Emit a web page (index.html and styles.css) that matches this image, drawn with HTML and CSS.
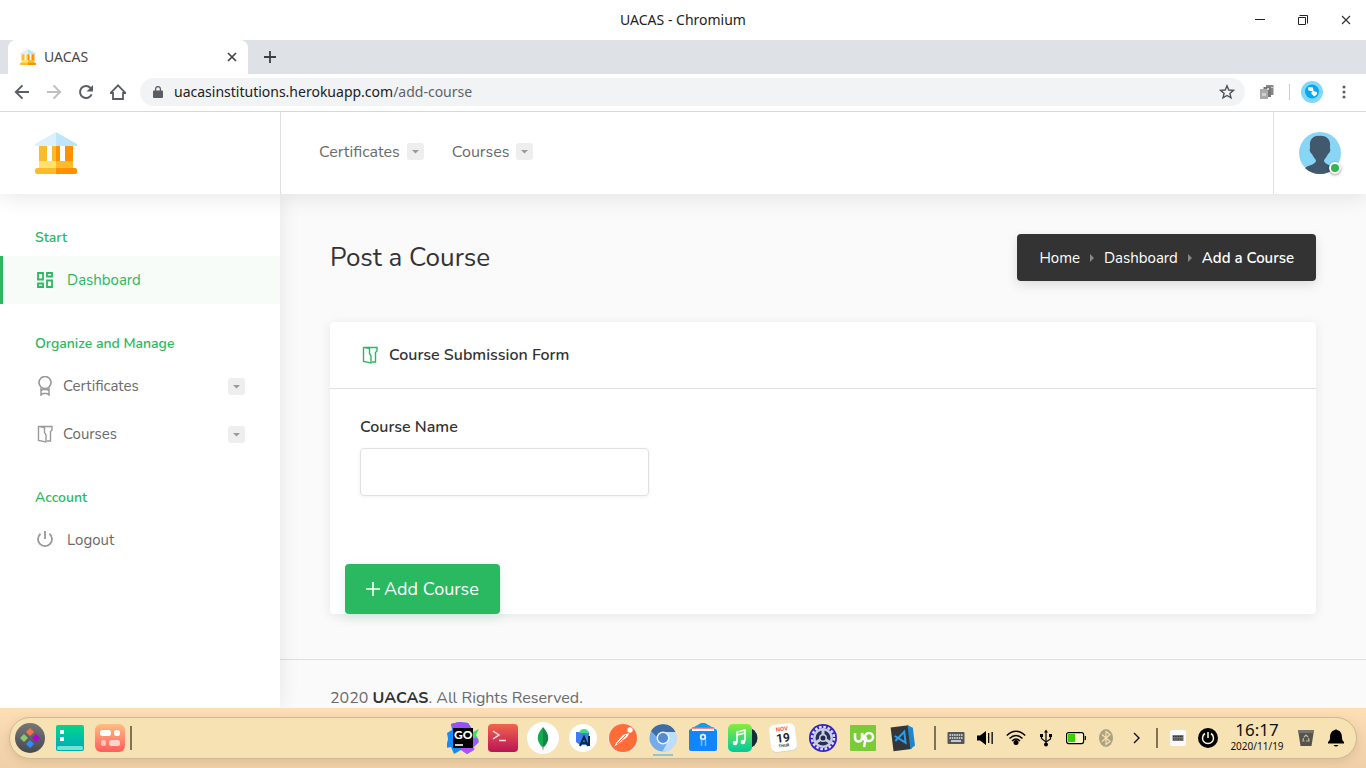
FILE: index.html
```html
<!DOCTYPE html>
<html lang="en">
<head>
<meta charset="utf-8">
<title>UACAS</title>
<meta name="viewport" content="width=device-width, initial-scale=1">
<link rel="stylesheet" href="styles.css">
</head>
<body>
<svg class="defs" aria-hidden="true">
  <defs>
    <symbol id="bank" viewBox="0 0 42 42">
      <path d="M21 0 0 12v2h21z" fill="#dcf0fd"/><path d="M21 0l21 12v2H21z" fill="#bde6fa"/>
      <path d="M4 14h8v16H4zM17 14h4v16h-4z" fill="#fbbc2c"/>
      <path d="M21 14h4v16h-4zM30 14h8v16h-8z" fill="#ff9100"/>
      <path d="M4 29h17v8H4z" fill="#ffe16b"/><path d="M21 29h17v8H21z" fill="#fbbc2c"/>
      <path d="M21 36H2a2 2 0 0 0-2 2v2a2 2 0 0 0 2 2h19z" fill="#fbbc2c"/>
      <path d="M21 36h19a2 2 0 0 1 2 2v2a2 2 0 0 1-2 2H21z" fill="#ff9100"/>
    </symbol>
    <symbol id="map" viewBox="0 0 16 18">
      <path d="M1.500 1.500h13.500v3.500l-1.500 1.500v9.500h-3.500M1.500 1v14.500l7.500 1.500v-7l-1.500-2.500V2.500l-5-1" fill="none" stroke="currentColor" stroke-width="1.400"/>
    </symbol>
    <symbol id="caret" viewBox="0 0 17 17"><path d="M5 7h7l-3.500 3.500z" fill="currentColor"/></symbol>
    <symbol id="keyboard" viewBox="0 0 18 14">
      <rect x=".5" y="1" width="17" height="12" rx="1" fill="#55575b"/>
      <path d="M2.500 4h13M2.500 7h13" stroke="#eee" stroke-width="1.500" stroke-dasharray="1.500 .8"/><path d="M4 10h10" stroke="#eee" stroke-width="1.500"/>
    </symbol>
  </defs>
</svg>

<div class="titlebar">
  <span class="window-title">UACAS - Chromium</span>
  <div class="window-controls">
    <button type="button" aria-label="Minimize"><svg viewBox="0 0 12 12"><path d="M1 5.500h10" stroke="#222" fill="none"/></svg></button>
    <button type="button" aria-label="Restore"><svg viewBox="0 0 12 12"><path d="M1.500 3.500h7v7h-7zM2.500 1.500h8v8" stroke="#222" fill="none"/></svg></button>
    <button type="button" aria-label="Close window"><svg viewBox="0 0 12 12"><path d="M2 2l8 8M10 2l-8 8" stroke="#333" stroke-width="1.200" fill="none"/></svg></button>
  </div>
</div>

<div class="tabstrip">
  <div class="tab">
    <svg class="favicon"><use href="#bank"/></svg>
    <span class="tab-title">UACAS</span>
    <button type="button" aria-label="Close tab"><svg viewBox="0 0 12 12"><path d="M2 2l8 8M10 2l-8 8" stroke="#3c4043" stroke-width="1.600" fill="none"/></svg></button>
  </div>
  <button class="new-tab" type="button" aria-label="New tab"><svg viewBox="0 0 12 12"><path d="M6 0v12M0 6h12" stroke="#3c4043" stroke-width="1.800"/></svg></button>
</div>

<div class="toolbar">
  <button class="tool" type="button" aria-label="Back"><svg viewBox="0 0 16 16"><path d="M15 8H2M8.500 1.300 1.800 8l6.700 6.700" fill="none" stroke="#5a5e63" stroke-width="1.900"/></svg></button>
  <button class="tool" type="button" aria-label="Forward"><svg viewBox="0 0 16 16"><path d="M1 8h13M7.500 1.300 14.200 8l-6.700 6.700" fill="none" stroke="#bdbfc1" stroke-width="1.900"/></svg></button>
  <button class="tool" type="button" aria-label="Reload"><svg viewBox="0 0 16 16"><path d="M13.600 10.300A6 6 0 1 1 12.500 4" fill="none" stroke="#5a5e63" stroke-width="2"/><path d="M15 1v6.500H8.500z" fill="#5a5e63"/></svg></button>
  <button class="tool" type="button" aria-label="Home"><svg viewBox="0 0 16 16"><path d="M.5 9 8 1.400 15.500 9H13v6H3V9z" fill="none" stroke="#5a5e63" stroke-width="1.800"/></svg></button>
  <div class="omnibox">
    <svg class="lock" viewBox="0 0 10 12"><path d="M1 4.500h8a1 1 0 0 1 1 1V11a1 1 0 0 1-1 1H1a1 1 0 0 1-1-1V5.500a1 1 0 0 1 1-1z" fill="#5a5e63"/><path d="M2.600 5V3a2.400 2.400 0 0 1 4.800 0v2" fill="none" stroke="#5a5e63" stroke-width="1.300"/></svg>
    <span class="url"><span class="host">uacasinstitutions.herokuapp.com</span>/add-course</span>
    <button class="star" type="button" aria-label="Bookmark"><svg viewBox="0 0 16 16"><path d="M8 1.800 9.800 6l4.600.4-3.500 3 1.100 4.500L8 11.500l-4 2.400 1.100-4.500-3.500-3L6.200 6z" fill="none" stroke="#4f5357" stroke-width="1.400"/></svg></button>
  </div>
  <button class="tool ext" type="button" aria-label="Extension"><svg viewBox="0 0 16 16"><path d="M7 1h7.500v10H7z" fill="#888"/><path d="M4.500 3H12v10H4.500z" fill="#777"/><path d="M1 5h8v10H1z" fill="#aaa"/><path d="M8 4h2v2H8zM12 3h2v1h-2zM3 9h4v3H3z" fill="#d0d0d0"/></svg></button>
  <span class="tool-divider"></span>
  <button class="tool profile" type="button" aria-label="Profile"><svg viewBox="0 0 22 22"><circle cx="11" cy="11" r="11" fill="#82d8fb"/><circle cx="11" cy="10.500" r="7" fill="#03a9f4"/><path d="m7.500 6 4.500.5.500 3.500H9L7 9z" fill="#fff"/><path d="m12 10 4 1v2l-2.500 2.500L10.500 13V11z" fill="#fff"/></svg></button>
  <button class="tool menu" type="button" aria-label="Menu"><svg viewBox="0 0 16 16"><circle cx="8" cy="3" r="1.500"/><circle cx="8" cy="8" r="1.500"/><circle cx="8" cy="13" r="1.500"/></svg></button>
</div>

<div class="app">
  <header class="app-header">
    <a class="brand" href="#" aria-label="UACAS home"><svg><use href="#bank"/></svg></a>
    <nav class="top-nav">
      <a href="#">Certificates <svg class="caret"><use href="#caret"/></svg></a>
      <a href="#">Courses <svg class="caret"><use href="#caret"/></svg></a>
    </nav>
    <div class="user">
      <button class="avatar" type="button" aria-label="Account menu">
        <svg viewBox="0 0 42 42"><circle cx="21" cy="21" r="21" fill="#88d5f6"/><path d="M11 14c-1-6 4-11 9-10 6-1 12 3 11 10v3c1 0 0 4-2 5-1 3-4 5-4 7 1 4 8 4 11 7-8 8-22 8-30 0 3-3 10-3 11-7 0-2-3-4-4-7-2-1-3-5-2-5z" fill="#42586c"/></svg>
        <span class="status"></span>
      </button>
    </div>
  </header>

  <div class="app-body">
    <aside class="sidebar">
      <h2>Start</h2>
      <a class="side-link active" href="#"><svg class="side-icon" viewBox="0 0 20 20"><path d="M3 3h5v6.500H3zM12 3h5v3.500h-5zM3 13.500h5V17H3zM12 10.500h5V17h-5z" fill="none" stroke="currentColor" stroke-width="1.800"/></svg><span class="wide">Dashboard</span></a>
      <h2>Organize and Manage</h2>
      <a class="side-link" href="#"><svg class="side-icon" viewBox="0 0 20 20"><circle cx="10" cy="6.500" r="6" fill="none" stroke="currentColor" stroke-width="1.700"/><path d="M6 11.500V19l2-1.500h4l2 1.500v-7.500M6 14.500l2-1h4l2 1" fill="none" stroke="currentColor" stroke-width="1.500"/></svg><span>Certificates</span><svg class="caret"><use href="#caret"/></svg></a>
      <a class="side-link" href="#"><svg class="side-icon map"><use href="#map"/></svg><span>Courses</span><svg class="caret"><use href="#caret"/></svg></a>
      <h2>Account</h2>
      <a class="side-link" href="#"><svg class="side-icon" viewBox="0 0 20 20"><path d="M5.500 3.800a7 7 0 1 0 9 0M10 1v8" fill="none" stroke="currentColor" stroke-width="1.800"/></svg><span class="wide">Logout</span></a>
    </aside>

    <div class="page">
      <main class="content">
        <div class="page-head">
          <h1>Post a Course</h1>
          <nav class="breadcrumb" aria-label="Breadcrumb">
            <a href="#">Home</a><i></i><a href="#">Dashboard</a><i></i><strong>Add a Course</strong>
          </nav>
        </div>
        <form class="card">
          <div class="card-head"><svg class="map"><use href="#map"/></svg><h3>Course Submission Form</h3></div>
          <div class="fields">
            <div class="field">
              <label for="course-name">Course Name</label>
              <input id="course-name" type="text">
            </div>
          </div>
          <button class="submit" type="button"><svg viewBox="0 0 14 14"><path d="M7 0v14M0 7h14" stroke="currentColor" stroke-width="1.600"/></svg>Add Course</button>
        </form>
      </main>
      <footer>2020 <strong>UACAS</strong>. All Rights Reserved.</footer>
    </div>
  </div>
</div>

<div class="desktop">
  <div class="dock">
    <div class="apps">
      <button type="button" aria-label="Launcher"><svg viewBox="0 0 32 32"><defs><linearGradient id="g1" x2="0" y2="1"><stop stop-color="#777"/><stop offset="1" stop-color="#444a4e"/></linearGradient></defs><circle cx="16" cy="16" r="15" fill="url(#g1)"/><path d="m16 6 4 4-4 4-4-4z" fill="#ff7043"/><path d="m10 12 4 4-4 4-4-4z" fill="#8bc96f"/><path d="m22 12 4 4-4 4-4-4z" fill="#b300d9"/><path d="m16 18 4 4-4 4-4-4z" fill="#2d8cff"/></svg></button>
      <button type="button" aria-label="Show desktop"><svg viewBox="0 0 32 32"><defs><linearGradient id="g2" x2="0" y2="1"><stop stop-color="#00d68a"/><stop offset="1" stop-color="#00a8bf"/></linearGradient></defs><rect x="2" y="3" width="28" height="26" rx="2" fill="url(#g2)"/><path d="M6 8h4v4H6zM6 15h4v4H6z" fill="#fff"/><rect x="3" y="24" width="26" height="4" rx="1.500" fill="#70e5d0"/></svg></button>
      <button type="button" aria-label="Multitasking view"><svg viewBox="0 0 32 32"><defs><linearGradient id="g3" x2="0" y2="1"><stop stop-color="#ffbd80"/><stop offset="1" stop-color="#ff5d5d"/></linearGradient></defs><rect x="1" y="2" width="30" height="28" rx="6" fill="url(#g3)"/><rect x="6" y="8" width="11" height="6" rx="2.500" fill="#fff"/><rect x="20" y="8" width="6" height="6" rx="2.500" fill="#fff"/><rect x="7" y="18" width="5" height="6" rx="2" fill="#ffc5c0"/><rect x="15" y="18" width="11" height="6" rx="2.500" fill="#ffd3d0"/></svg></button>
      <span class="dock-line left-line"></span>
    </div>

    <div class="apps running">
      <button type="button" aria-label="GoLand"><svg viewBox="0 0 32 32"><path d="M0 11 5 8 4 2l8-2 9 1 4 6-2 17 4 4-7 4-6-4-7 4-3-7-5 1 2-9z" fill="#168bff"/><path d="m4 2 8-2 9 1 4 6H6z" fill="#9b4dff"/><path d="m12 26 12-2 4 3-8 5z" fill="#b34df5"/><path d="m26 10 6-3-3 6 3 5-6 5z" fill="#35e06a"/><path d="M26 16h4l2 4-6 6z" fill="#8b62ff"/><path d="M6 6h20v20H6z"/><path d="M8 23h8" stroke="#fff" stroke-width="1.600"/><text x="7" y="17" class="go-text">GO</text></svg></button>
      <button type="button" aria-label="Terminal"><svg viewBox="0 0 32 32"><defs><linearGradient id="g4" x2="0" y2="1"><stop stop-color="#f2644d"/><stop offset="1" stop-color="#b91456"/></linearGradient></defs><rect x="1" y="2" width="30" height="28" rx="4" fill="url(#g4)"/><path d="m6 9 6 4-6 4M12 18.500h7" fill="none" stroke="#ffe5e9" stroke-width="1.500"/></svg></button>
      <button type="button" aria-label="MongoDB Compass"><svg viewBox="0 0 32 32"><circle cx="16" cy="16" r="16" fill="#fff"/><path d="M16 5c-7 8-7 14 0 21z" fill="#13aa52"/><path d="M16 5c7 8 7 14 0 21z" fill="#128748"/><path d="M16 24v4" stroke="#999"/></svg></button>
      <button type="button" aria-label="Android Studio"><svg viewBox="0 0 32 32"><circle cx="16" cy="16" r="14" fill="#fff"/><path d="M9 10h13v13h-9l-4-3z" fill="#3f7df0"/><path d="M12 11q1-4 5-4t5 4z" fill="#3ddc84"/><path d="m13 24 4-9 4 9M15 21h4M22 14v10" fill="none" stroke="#0b2b4b" stroke-width="2"/></svg></button>
      <button type="button" aria-label="Postman"><svg viewBox="0 0 32 32"><circle cx="16" cy="16" r="15" fill="#ffe3d4"/><circle cx="16" cy="16" r="14" fill="#ff6c37"/><circle cx="23" cy="8" r="2.700" fill="#fff"/><path d="m22 11-6 2-7 8-2 4 5-4 4-2 5-5z" fill="#fff"/><path d="m19 13-9 9M21 16l-6 3" stroke="#ff6c37"/></svg></button>
      <button class="current" type="button" aria-label="Chromium"><svg viewBox="0 0 32 32"><circle cx="16" cy="16" r="13.500" fill="#71adeb"/><path d="M4 9a14 14 0 0 1 24.500 1H16a6 6 0 0 0-6 5z" fill="#3c6da8"/><path d="M28.500 10a13.500 13.500 0 0 1-13 19.500L21 19q2-5-3-9z" fill="#bdddfd"/><circle cx="16" cy="16" r="6.500" fill="#e8f3ff"/><circle cx="16" cy="16" r="5" fill="#568bd1"/></svg></button>
      <button type="button" aria-label="Files"><svg viewBox="0 0 32 32"><path d="m2 8 12-7h4l12 7v8H2z" fill="#0ba0ee"/><path d="M5 6h22v5H5z" fill="#fff"/><path d="M5 6h22" stroke="#ff5b72" stroke-width="1.500"/><path d="M2 9h28v18a2 2 0 0 1-2 2H4a2 2 0 0 1-2-2z" fill="#1185fa"/><circle cx="16" cy="15" r="2.300" fill="none" stroke="#e3f5ff" stroke-width="1.800"/><path d="M14.500 17.500V24M18.500 17v7" stroke="#64c2ff" stroke-width="1.500"/></svg></button>
      <button type="button" aria-label="Music"><svg viewBox="0 0 32 32"><defs><linearGradient id="g5" x2="0" y2="1"><stop stop-color="#86ed38"/><stop offset="1" stop-color="#00caa0"/></linearGradient></defs><circle cx="20" cy="16" r="10.500" fill="#122f35"/><rect x="1" y="2" width="24" height="28" rx="5" fill="url(#g5)"/><path d="M10 21V10l8-2v11M10 13l8-2" fill="none" stroke="#fff" stroke-width="1.600"/><circle cx="8" cy="21" r="2.300" fill="#fff"/><circle cx="16" cy="20" r="2.300" fill="#fff"/></svg></button>
      <button type="button" aria-label="Calendar"><svg viewBox="0 0 32 32"><g transform="rotate(-7 16 16)"><rect x="3" y="3" width="26" height="27" rx="5" fill="#d9d2c5"/><rect x="3" y="2" width="26" height="27" rx="5" fill="#fff"/><text x="16" y="9" class="cal-month">NOV</text><text x="16" y="20" class="cal-day">19</text><text x="16" y="25" class="cal-week">THUR</text></g></svg></button>
      <button type="button" aria-label="Settings"><svg viewBox="0 0 32 32"><circle cx="16" cy="16" r="14" fill="#3525cb"/><circle cx="16" cy="16" r="11" fill="none" stroke="#e1e4f3" stroke-width="2.500" stroke-dasharray="2.600 1.720"/><circle cx="16" cy="16" r="10" fill="#c9cde2"/><circle cx="16" cy="16" r="7.500" fill="#282e58"/><path d="M16 16V7M16 16l8 5M16 16l-8 5" stroke="#c9cde2" stroke-width="3"/><circle cx="16" cy="16" r="4" fill="#c9cde2"/><circle cx="16" cy="16" r="2.500" fill="#242b51"/></svg></button>
      <button type="button" aria-label="Upwork"><svg viewBox="0 0 32 32"><rect x="3" y="3" width="26" height="26" rx="1" fill="#79cb38"/><path d="M8 11v5a3.500 3.500 0 0 0 7 0v-5q1 6 4 8M17 25l2-10" fill="none" stroke="#fff" stroke-width="2.600"/><circle cx="22" cy="15" r="4" fill="none" stroke="#fff" stroke-width="2.600"/></svg></button>
      <button type="button" aria-label="Visual Studio Code"><svg viewBox="0 0 32 32"><g transform="rotate(-7 16 16)"><path d="M5 4h18v24H5z" fill="#34363a"/><path d="m22 4 5 3v18l-5 3z" fill="#1c86d1"/><path d="m8 13 10 8V10L8 18" fill="none" stroke="#299de5" stroke-width="2"/></g></svg></button>
    </div>

    <div class="tray">
      <span class="dock-line"></span>
      <button type="button" aria-label="Keyboard layout"><svg class="small"><use href="#keyboard"/></svg></button>
      <button type="button" aria-label="Volume"><svg viewBox="0 0 20 20"><path d="M1 7.500h3l6-4.500v14l-6-4.500H1zM12 5h1.300v10H12zM15.500 4h1.300v12h-1.300z"/></svg></button>
      <button type="button" aria-label="Wi-Fi"><svg viewBox="0 0 20 20"><path d="M.8 7.500q9.200-8.500 18.400 0M3.500 10.500q6.500-6 13 0M6 13q4-4 8 0" fill="none" stroke="#000" stroke-width="1.500"/><circle cx="10" cy="14.500" r="2.500"/></svg></button>
      <button type="button" aria-label="USB"><svg viewBox="0 0 20 20"><path d="M10 3v14M5.500 8v2.500L10 14l4.500-3V8" fill="none" stroke="#111" stroke-width="1.300"/><path d="m10 1.500 2 3H8zM4 6h3v3H4zM13 6h3v3h-3z"/><circle cx="10" cy="16.500" r="2"/></svg></button>
      <button type="button" aria-label="Battery"><svg viewBox="0 0 20 20"><rect x=".6" y="4.600" width="17" height="11" rx="2" fill="#fff3cc" stroke="#000" stroke-width="1.200"/><path d="M2 6h7v8H2z" fill="#3bd000"/><path d="M19.300 8v4" stroke="#000" stroke-width="1.200"/></svg></button>
      <button type="button" aria-label="Bluetooth"><svg viewBox="0 0 20 20"><ellipse cx="10" cy="10" rx="7" ry="9" fill="#ada27f"/><path d="m6 6.500 8 7-4 3v-13l4 3-8 7" fill="none" stroke="#f6e2b3" stroke-width="1.200"/></svg></button>
      <button type="button" aria-label="More"><svg viewBox="0 0 20 20"><path d="m8 5 5 5-5 5" fill="none" stroke="#111" stroke-width="1.400"/></svg></button>
      <span class="dock-line"></span>
      <button type="button" aria-label="On-screen keyboard"><svg viewBox="0 0 20 20"><rect x="2" y="2" width="16" height="16" rx="2.500" fill="#fafafa"/><path d="M4.500 7h11v6h-11z" fill="#777"/><path d="M5 8.500h10M5 11h10" stroke="#222" stroke-dasharray="1 .7"/></svg></button>
      <button type="button" aria-label="Power"><svg viewBox="0 0 20 20"><circle cx="10" cy="10" r="10"/><path d="M7 5.500a5.500 5.500 0 1 0 6 0M10 4v6" fill="none" stroke="#fff5d6" stroke-width="1.500"/></svg></button>
      <div class="clock"><span class="time">16:17</span><span class="date">2020/11/19</span></div>
      <button type="button" aria-label="Trash"><svg viewBox="0 0 20 20"><path d="M2 2h16l-2.500 16h-11z" fill="#55534b"/><path d="M2 2h16l-.5 3h-15z" fill="#77756b"/><path d="m8 9 2-2 2 2M12.500 10l.5 3h-3M8.500 13H7l.5-3" fill="none" stroke="#bdb9a5" stroke-width="1.200"/></svg></button>
      <button type="button" aria-label="Notifications"><svg viewBox="0 0 20 20"><path d="M9 2q1-1.500 2 0c4 1 5 4 5 8 0 2 1 3 2 4v1.500H2V14c1-1 2-2 2-4 0-4 1-7 5-8zM7.500 17h5q-2.500 3-5 0z"/></svg></button>
    </div>
  </div>
</div>
</body>
</html>
```
FILE: styles.css
```css
* { box-sizing: border-box; }

:root {
  --green: #2ab860;
  --ink: #333;
  --muted: #6b6b6b;
  --line: #dfdfdf;
}

body {
  margin: 0;
  height: 100vh;
  display: flex;
  flex-direction: column;
  overflow: hidden;
  background: #fff;
  color: var(--muted);
  font-family: Nunito, Lato, "Noto Sans", sans-serif;
  font-size: 16px;
}

button {
  display: flex;
  align-items: center;
  justify-content: center;
  padding: 0;
  border: 0;
  background: none;
  font: inherit;
  color: inherit;
}

a { color: inherit; text-decoration: none; }
strong { font-weight: 700; }
svg { display: block; flex: none; }
.defs { position: absolute; width: 0; height: 0; }

/* Browser window */
.titlebar {
  position: relative;
  flex: none;
  height: 40px;
  padding-bottom: 2px;
  display: flex;
  align-items: center;
  justify-content: center;
  font: 14px "Noto Sans", sans-serif;
  color: #222;
}
.window-controls { position: absolute; right: 0; top: 0; height: 40px; display: flex; }
.window-controls button { width: 43px; padding-left: 2px; }
.window-controls svg { width: 12px; height: 12px; }

.tabstrip {
  flex: none;
  height: 34px;
  padding: 0 8px;
  display: flex;
  background: #dee1e6;
}
.tab {
  width: 240px;
  padding: 0 10px 0 12px;
  display: flex;
  align-items: center;
  gap: 8px;
  background: #fff;
  border-radius: 8px 8px 0 0;
  font: 14px "Noto Sans", sans-serif;
  color: #45494d;
}
.tab-title { padding-bottom: 2px; }
.favicon { width: 16px; height: 16px; }
.tab button { margin-left: auto; }
.tab button svg, .new-tab svg { width: 12px; height: 12px; }
.new-tab { width: 44px; }

.toolbar {
  flex: none;
  height: 38px;
  padding: 0 6px 1px;
  display: flex;
  align-items: center;
  border-bottom: 1px solid #d8d9db;
}
.tool { width: 32px; height: 32px; }
.tool svg { width: 16px; height: 16px; }
.omnibox {
  flex: 1;
  height: 28px;
  margin: 0 6px;
  padding: 0 10px 0 13px;
  display: flex;
  align-items: center;
  gap: 11px;
  background: #f1f3f4;
  border-radius: 14px;
  font: 14px "Noto Sans", sans-serif;
  color: #5f6368;
}
.url { padding-bottom: 2px; }
.host { color: #202124; }
.lock { width: 10px; height: 12px; }
.star { margin-left: auto; }
.star svg { width: 16px; height: 16px; }
.tool-divider { width: 1px; height: 16px; margin: 0 6px; background: #ccced1; }
.profile svg { width: 22px; height: 22px; }
.menu svg { fill: #5a5e63; }

/* Application */
.app {
  flex: 1;
  min-height: 0;
  display: flex;
  flex-direction: column;
  overflow: hidden;
}
.app-header {
  z-index: 2;
  flex: none;
  height: 82px;
  display: flex;
  background: #fff;
  box-shadow: 0 4px 20px rgba(0, 0, 0, 0.09);
}
.brand {
  width: 281px;
  padding-left: 35px;
  display: flex;
  align-items: center;
  border-right: 1px solid var(--line);
}
.brand svg { width: 42px; height: 42px; }
.top-nav {
  flex: 1;
  padding: 0 38px 3px;
  display: flex;
  align-items: center;
  gap: 28px;
}
.top-nav a { display: flex; align-items: center; gap: 7px; }
.caret {
  width: 17px;
  height: 17px;
  border-radius: 3px;
  background: #eee;
  color: #999;
}
.user {
  width: 93px;
  display: flex;
  align-items: center;
  justify-content: center;
  border-left: 1px solid var(--line);
}
.avatar { position: relative; width: 42px; height: 42px; }
.avatar svg { width: 42px; height: 42px; }
.status {
  position: absolute;
  right: 0;
  bottom: 0;
  width: 12px;
  height: 12px;
  border: 2px solid #fff;
  border-radius: 50%;
  background: #34b34f;
  box-shadow: 0 1px 3px rgba(0, 0, 0, 0.4);
}

.app-body { flex: 1; min-height: 0; display: flex; }
.sidebar {
  z-index: 1;
  flex: none;
  width: 280px;
  padding-top: 4px;
  background: #fff;
  box-shadow: 0 0 20px rgba(0, 0, 0, 0.09);
}
.sidebar h2 {
  margin: 0;
  padding: 29px 35px 7px;
  font-size: 14px;
  line-height: 22px;
  font-weight: 600;
  color: var(--green);
}
.side-link {
  height: 48px;
  padding: 0 35px;
  display: flex;
  align-items: center;
  gap: 8px;
  font-size: 15px;
}
.side-icon { width: 20px; height: 20px; color: #999; }
.side-icon.map { padding: 1px 2px; }
.wide { padding-left: 4px; }
.side-link .caret { margin-left: auto; }
.side-link.active {
  padding-left: 32px;
  border-left: 3px solid var(--green);
  background: #f7fcf9;
  color: var(--green);
}
.active .side-icon { color: var(--green); }

.page {
  flex: 1;
  min-width: 0;
  background: #fafafa;
}
.content { padding: 40px 50px 45px; }
.page-head {
  display: flex;
  align-items: center;
  justify-content: space-between;
  margin-bottom: 41px;
}
h1 { margin: 0; font-size: 26px; font-weight: 400; color: var(--ink); }
.breadcrumb {
  height: 47px;
  padding: 0 22px;
  display: flex;
  align-items: center;
  gap: 10px;
  border-radius: 4px;
  background: #333;
  color: #fff;
  font-size: 15px;
  box-shadow: 0 4px 12px rgba(0, 0, 0, 0.12);
}
.breadcrumb strong { font-weight: 600; }
.breadcrumb i {
  border: 4px solid transparent;
  border-left-color: #888;
  border-right: 0;
}

.card {
  border-radius: 4px;
  background: #fff;
  box-shadow: 0 2px 12px rgba(0, 0, 0, 0.08);
}
.card-head {
  height: 67px;
  padding: 0 32px;
  display: flex;
  align-items: center;
  gap: 11px;
  border-bottom: 1px solid var(--line);
  color: var(--green);
}
.card-head .map { width: 16px; height: 18px; }
h3, label { font-size: 16px; font-weight: 600; color: var(--ink); }
h3 { margin: 0; }
.fields {
  padding: 26px 30px 68px;
  display: grid;
  grid-template-columns: repeat(3, 1fr);
  gap: 30px;
}
label { display: block; margin-bottom: 9px; line-height: 24px; }
.field input {
  display: block;
  width: 100%;
  height: 48px;
  padding: 0 16px;
  border: 1px solid #e0e0e0;
  border-radius: 4px;
  background: #fff;
  font: inherit;
  box-shadow: 0 1px 4px rgba(0, 0, 0, 0.06);
}
.submit {
  height: 50px;
  margin-left: 15px;
  padding: 0 21px;
  gap: 4px;
  border-radius: 4px;
  background: var(--green);
  color: #fff;
  font-size: 18px;
  box-shadow: 0 4px 12px rgba(42, 184, 96, 0.15);
}
.submit svg { width: 14px; height: 14px; }
footer {
  padding: 26px 50px;
  border-top: 1px solid var(--line);
  line-height: 24px;
}
footer strong { color: var(--ink); }

/* Desktop dock */
.desktop {
  flex: none;
  height: 60px;
  padding: 9px;
  background: linear-gradient(#fddfb5, #f3d4ac 60%, #efd0a8);
}
.dock {
  height: 42px;
  padding-right: 5px;
  display: flex;
  border: 1px solid #cdb899;
  border-radius: 21px;
  background: #f6e2b3;
  color: #111;
  box-shadow: 0 3px 10px rgba(120, 80, 30, 0.15);
}
.apps { display: flex; }
.apps button { position: relative; width: 40px; }
.apps svg { width: 32px; height: 32px; }
.running { margin-left: auto; }
.current::after {
  content: "";
  position: absolute;
  left: 10px;
  bottom: 2px;
  width: 20px;
  height: 2px;
  background: #8dc6d4;
}
.dock-line { width: 2px; height: 24px; margin: auto 5px auto 11px; background: #7f7357; }
.left-line { margin-left: 0; }
.tray { display: flex; align-items: center; }
.tray button { width: 30px; height: 40px; }
.tray svg { width: 20px; height: 20px; }
.tray .small { width: 18px; height: 14px; }
.tray button + .dock-line { height: 20px; margin: auto 5px; }
.clock {
  width: 68px;
  padding-bottom: 2px;
  display: flex;
  flex-direction: column;
  align-items: center;
  font-family: "Noto Sans", sans-serif;
}
.time { font-size: 17px; line-height: 18px; }
.date { font-size: 10px; line-height: 14px; }

.go-text { fill: #fff; font: 900 12px Lato, sans-serif; }
.cal-month, .cal-day, .cal-week { text-anchor: middle; font-family: Roboto, sans-serif; font-weight: 700; }
.cal-month { font-size: 6px; fill: #ee6259; }
.cal-day { font-size: 12px; fill: #20252b; }
.cal-week { font-size: 4px; fill: #333; }
```
